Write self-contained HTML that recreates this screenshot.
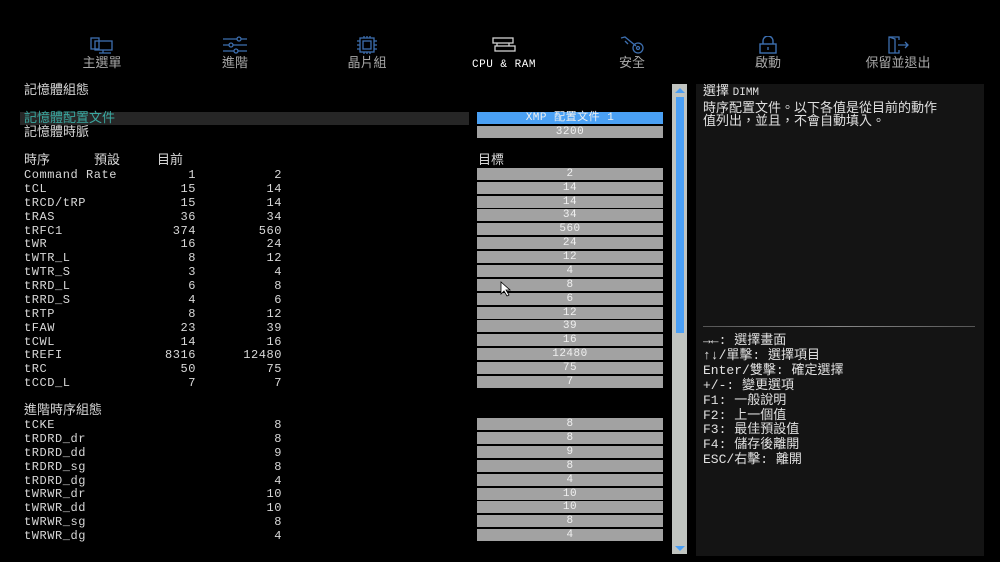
<!DOCTYPE html>
<html><head><meta charset="utf-8"><style>
body{margin:0;width:1000px;height:562px;background:#000;overflow:hidden;position:relative;font-family:"Liberation Mono","Noto Sans CJK TC",monospace;color:#d8d8d8}
.a{position:absolute}
.m{font-size:12px;letter-spacing:.55px;line-height:14px;white-space:nowrap}
.c{font-family:"Liberation Sans","Noto Sans CJK TC",sans-serif;font-size:13px;line-height:14px;white-space:nowrap}
.nav{position:absolute;top:36px;width:120px;text-align:center;color:#a8a8a8;font-family:"Liberation Sans","Noto Sans CJK TC",sans-serif;font-size:13px;line-height:16px}
.nav svg{display:block;margin:0 auto 1px;}
.box{position:absolute;left:477px;width:186px;height:12px;background:#a2a2a2;color:#f0f0f0;text-align:center;font-size:11px;line-height:13px;letter-spacing:.5px}
.r{text-align:right}
</style></head><body>
<div class="nav" style="left:42px"><svg width="26" height="18" viewBox="0 0 26 18" fill="none" stroke="#3d6fb0" stroke-width="1.3"><rect x="2" y="2" width="8" height="11"/><rect x="6" y="5" width="17" height="9"/><path d="M10 17h12M14 14v3"/></svg>主選單</div>
<div class="nav" style="left:175px"><svg width="26" height="18" viewBox="0 0 26 18" fill="none" stroke="#3d6fb0" stroke-width="1.3"><path d="M1 3h24M1 9h24M1 15h24"/><circle cx="17" cy="3" r="2" fill="#000"/><circle cx="9" cy="9" r="2" fill="#000"/><circle cx="14" cy="15" r="2" fill="#000"/></svg>進階</div>
<div class="nav" style="left:307px"><svg width="26" height="18" viewBox="0 0 26 18" fill="none" stroke="#3d6fb0" stroke-width="1.3"><rect x="6" y="2" width="14" height="14"/><rect x="9" y="5" width="8" height="8"/><path d="M3 5h3M3 9h3M3 13h3M20 5h3M20 9h3M20 13h3M10 0v2M13 0v2M16 0v2M10 16v2M13 16v2M16 16v2"/></svg>晶片組</div>
<div class="nav" style="left:444px;color:#fff;font-family:'Liberation Mono',monospace;font-size:11px;letter-spacing:.5px"><svg width="26" height="18" viewBox="0 0 26 18" fill="none" stroke="#d0d0d0" stroke-width="1.3"><rect x="2" y="2" width="20" height="5"/><rect x="4" y="10" width="20" height="5"/><path d="M6 7v3M18 7v3"/></svg><span style="position:relative;top:2px">CPU &amp; RAM</span></div>
<div class="nav" style="left:572px"><svg width="26" height="18" viewBox="0 0 26 18" fill="none" stroke="#3d6fb0" stroke-width="1.3"><path d="M2 2l4-1 11 9"/><circle cx="19" cy="12" r="5"/><circle cx="19" cy="12" r="1.5"/><path d="M6 5l3 3"/></svg>安全</div>
<div class="nav" style="left:708px"><svg width="26" height="18" viewBox="0 0 26 18" fill="none" stroke="#3d6fb0" stroke-width="1.4"><path d="M8 8V5a5 5 0 0 1 10 0v3"/><rect x="5" y="8" width="16" height="9"/><path d="M13 11v3"/></svg>啟動</div>
<div class="nav" style="left:838px"><svg width="26" height="18" viewBox="0 0 26 18" fill="none" stroke="#3d6fb0" stroke-width="1.3"><path d="M14 4V1H4v16h10v-3"/><path d="M4 1l6 2v14"/><path d="M13 9h10M20 6l3 3-3 3"/></svg>保留並退出</div>

<div class="a c" style="left:24px;top:83px">記憶體組態</div>
<div class="a" style="left:20px;top:112px;width:449px;height:13px;background:#262626"></div>
<div class="a c" style="left:24px;top:111px;color:#3aa8a0">記憶體配置文件</div>
<div class="a c" style="left:24px;top:125px">記憶體時脈</div>
<div class="box" style="top:112px;background:#4aa0f4;height:12px">XMP 配置文件 1</div>
<div class="box" style="top:126px">3200</div>

<div class="a c" style="left:24px;top:153px">時序</div>
<div class="a c" style="left:94px;top:153px">預設</div>
<div class="a c" style="left:157px;top:153px">目前</div>
<div class="a c" style="left:478px;top:153px">目標</div>

<div class="a m" style="left:24px;top:169px;line-height:13.87px">Command Rate<br>tCL<br>tRCD/tRP<br>tRAS<br>tRFC1<br>tWR<br>tWTR_L<br>tWTR_S<br>tRRD_L<br>tRRD_S<br>tRTP<br>tFAW<br>tCWL<br>tREFI<br>tRC<br>tCCD_L</div>
<div class="a m r" style="left:140px;width:56px;top:169px;line-height:13.87px">1<br>15<br>15<br>36<br>374<br>16<br>8<br>3<br>6<br>4<br>8<br>23<br>14<br>8316<br>50<br>7</div>
<div class="a m r" style="left:222px;width:60px;top:169px;line-height:13.87px">2<br>14<br>14<br>34<br>560<br>24<br>12<br>4<br>8<br>6<br>12<br>39<br>16<br>12480<br>75<br>7</div>

<div class="box" style="top:168px">2</div>
<div class="box" style="top:182px">14</div>
<div class="box" style="top:196px">14</div>
<div class="box" style="top:209px">34</div>
<div class="box" style="top:223px">560</div>
<div class="box" style="top:237px">24</div>
<div class="box" style="top:251px">12</div>
<div class="box" style="top:265px">4</div>
<div class="box" style="top:279px">8</div>
<div class="box" style="top:293px">6</div>
<div class="box" style="top:307px">12</div>
<div class="box" style="top:320px">39</div>
<div class="box" style="top:334px">16</div>
<div class="box" style="top:348px">12480</div>
<div class="box" style="top:362px">75</div>
<div class="box" style="top:376px">7</div>

<div class="a c" style="left:24px;top:403px">進階時序組態</div>
<div class="a m" style="left:24px;top:419px;line-height:13.875px">tCKE<br>tRDRD_dr<br>tRDRD_dd<br>tRDRD_sg<br>tRDRD_dg<br>tWRWR_dr<br>tWRWR_dd<br>tWRWR_sg<br>tWRWR_dg</div>
<div class="a m r" style="left:222px;width:60px;top:419px;line-height:13.875px">8<br>8<br>9<br>8<br>4<br>10<br>10<br>8<br>4</div>
<div class="box" style="top:418px">8</div>
<div class="box" style="top:432px">8</div>
<div class="box" style="top:446px">9</div>
<div class="box" style="top:460px">8</div>
<div class="box" style="top:474px">4</div>
<div class="box" style="top:488px">10</div>
<div class="box" style="top:501px">10</div>
<div class="box" style="top:515px">8</div>
<div class="box" style="top:529px">4</div>

<svg class="a" style="left:500px;top:281px" width="12" height="16" viewBox="0 0 12 16"><path d="M1 1v12l3-3 3 5 2-1-3-5h4z" fill="#fff" stroke="#000" stroke-width=".8"/></svg>

<div class="a" style="left:672px;top:84px;width:15px;height:470px;background:#c0c4c0"></div>
<div class="a" style="left:676px;top:97px;width:8px;height:236px;background:#4a9ff5"></div>
<svg class="a" style="left:674px;top:86px" width="12" height="8"><path d="M1 7l5-5 5 5z" fill="#4a9ff5"/></svg>
<svg class="a" style="left:674px;top:545px" width="12" height="8"><path d="M1 1l5 5 5-5z" fill="#4a9ff5"/></svg>

<div class="a" style="left:696px;top:84px;width:288px;height:472px;background:#141414"></div>
<div class="a c" style="left:703px;top:84px;color:#e0e0e0;line-height:13.5px">選擇 <span style="font-family:'Liberation Mono';font-size:11px">DIMM</span><br>時序配置文件。以下各值是從目前的動作<br>值列出，並且，不會自動填入。</div>
<div class="a" style="left:703px;top:326px;width:272px;height:1px;background:linear-gradient(90deg,#555,#888,#555)"></div>
<div class="a c" style="left:703px;top:333px;color:#e0e0e0;line-height:13.9px"><span style="font-family:'Liberation Mono'">→←: </span>選擇畫面<br><span style="font-family:'Liberation Mono'">↑↓/</span>單擊<span style="font-family:'Liberation Mono'">: </span>選擇項目<br><span style="font-family:'Liberation Mono'">Enter/</span>雙擊<span style="font-family:'Liberation Mono'">: </span>確定選擇<br><span style="font-family:'Liberation Mono'">+/-: </span>變更選項<br><span style="font-family:'Liberation Mono'">F1: </span>一般說明<br><span style="font-family:'Liberation Mono'">F2: </span>上一個值<br><span style="font-family:'Liberation Mono'">F3: </span>最佳預設值<br><span style="font-family:'Liberation Mono'">F4: </span>儲存後離開<br><span style="font-family:'Liberation Mono'">ESC/</span>右擊<span style="font-family:'Liberation Mono'">: </span>離開</div>
</body></html>
